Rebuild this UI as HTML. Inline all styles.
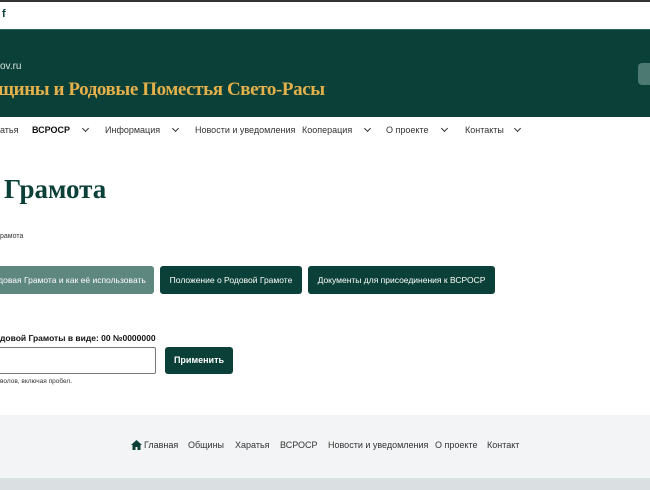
<!DOCTYPE html>
<html><head><meta charset="utf-8"><style>
*{margin:0;padding:0;box-sizing:border-box}
body{width:650px;height:490px;overflow:hidden;background:#fff;font-family:"Liberation Sans",sans-serif;position:relative;color:#222}
.top{position:absolute;top:0;left:0;width:650px;height:2px;background:#333}
.fb{position:absolute;left:2px;top:8px;font-size:11px;font-weight:bold;color:#0b4038}
.hdr{position:absolute;top:29px;left:0;width:650px;height:88px;background:#0b4038;border-top:1px solid #2e6a60}
.dom{position:absolute;left:0;top:31px;font-size:10px;color:#d8e4e0}
.ttl{position:absolute;left:-2px;top:49px;font-family:"Liberation Serif",serif;font-size:19px;font-weight:bold;color:#e3b04a;white-space:nowrap;letter-spacing:-0.4px}
.hbtn{position:absolute;left:638px;top:33px;width:20px;height:22px;background:#4c7a72;border-radius:4px}
.nav{position:absolute;top:125px;left:0;font-size:9px;color:#333;white-space:nowrap}
.nav span{position:absolute}
.h1{position:absolute;left:4px;top:174px;font-family:"Liberation Serif",serif;font-size:27px;color:#0b4038;font-weight:bold}
.bc{position:absolute;left:0;top:233px;font-size:7px;color:#333}
.b{position:absolute;top:266px;height:28px;border-radius:3px;background:#0b4038;color:#fff;font-size:8.5px;line-height:28px;text-align:center;white-space:nowrap}
.lbl{position:absolute;left:0;top:333px;font-size:8.5px;font-weight:bold;color:#111}
.inp{position:absolute;left:-5px;top:347px;width:161px;height:27px;border:1px solid #777;border-radius:2px}
.ap{position:absolute;left:165px;top:347px;width:68px;height:27px;background:#0b4038;border-radius:3px;color:#fff;font-weight:bold;font-size:9px;line-height:27px;text-align:center}
.hint{position:absolute;left:0;top:378px;font-size:6.5px;color:#333}
.ft{position:absolute;top:415px;left:0;width:650px;height:63px;background:#f2f4f5}
.ft2{position:absolute;top:478px;left:0;width:650px;height:12px;background:#dadfe1}
.fl{position:absolute;top:440px;font-size:9px;color:#333;white-space:nowrap}
.fl span{position:absolute}
.chev{display:inline-block;width:5px;height:5px;border-right:1.3px solid #333;border-bottom:1.3px solid #333;transform:rotate(45deg);position:absolute;top:1px}
</style></head><body>
<div class="top"></div>
<div class="fb">f</div>
<div class="hdr">
<div class="dom">ov.ru</div>
<div class="ttl">щины и Родовые Поместья Свето-Расы</div>
<div class="hbtn"></div>
</div>
<div class="nav">
<span style="left:0">атья</span>
<span style="left:32px;font-weight:bold;color:#111">ВСРОСР</span><i class="chev" style="left:83px"></i>
<span style="left:105px">Информация</span><i class="chev" style="left:173px"></i>
<span style="left:195px">Новости и уведомления</span>
<span style="left:302px">Кооперация</span><i class="chev" style="left:365px"></i>
<span style="left:386px">О проекте</span><i class="chev" style="left:442px"></i>
<span style="left:465px">Контакты</span><i class="chev" style="left:515px"></i>
</div>
<div class="h1">Грамота</div>
<div class="bc">рамота</div>
<div class="b" style="left:-10px;width:164px;background:#5e8780">довая Грамота и как её использовать</div>
<div class="b" style="left:160px;width:142px">Положение о Родовой Грамоте</div>
<div class="b" style="left:308px;width:187px">Документы для присоединения к ВСРОСР</div>
<div class="lbl">довой Грамоты в виде: 00 №0000000</div>
<div class="inp"></div>
<div class="ap">Применить</div>
<div class="hint">волов, включая пробел.</div>
<div class="ft"></div><div class="ft2"></div>
<div class="fl">
<svg style="position:absolute;left:131px;top:0" width="11" height="10" viewBox="0 0 11 10"><path d="M5.5 0L0 5h1.5v5h3V7h2v3h3V5H11z" fill="#0b4038"/></svg>
<span style="left:144px">Главная</span>
<span style="left:188px">Общины</span>
<span style="left:235px">Харатья</span>
<span style="left:280px">ВСРОСР</span>
<span style="left:328px">Новости и уведомления</span>
<span style="left:435px">О проекте</span>
<span style="left:487px">Контакт</span>
</div>
</body></html>
